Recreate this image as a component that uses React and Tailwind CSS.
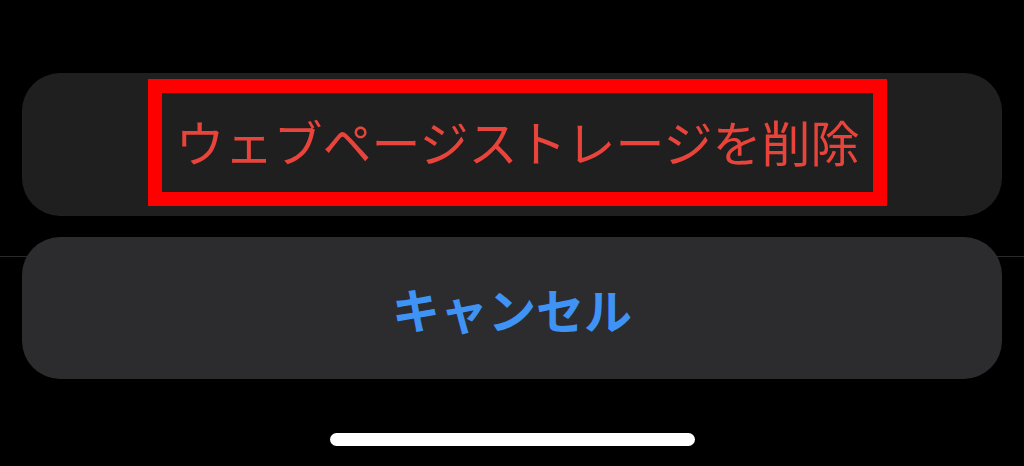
export default function App() {
  return (
    <div
      className="relative h-[466px] w-[1024px] overflow-hidden bg-black"
      style={{ fontFamily: '"Noto Sans CJK JP", "Noto Sans", sans-serif' }}
    >
      <div className="absolute inset-x-0 top-[256px] h-px bg-[#2a2a2a]" />
      <div className="relative flex flex-col px-[22px] pt-[73px]">
        <div className="flex h-[143px] items-center justify-center rounded-[38px] bg-[#1f1f1f]">
          <div className="mb-[4px] ml-[11px] flex h-[127px] w-[739px] items-center justify-center border-[14px] border-[#ff0000]">
            <span className="mb-[4px] text-[49px] leading-none text-[#e9443b]">
              ウェブページストレージを削除
            </span>
          </div>
        </div>
        <div className="mt-[21px] flex h-[142px] items-center justify-center rounded-[38px] bg-[#2c2c2e]">
          <span className="text-[48px] font-bold leading-none text-[#3f93f5]">キャンセル</span>
        </div>
        <div className="mt-[54px] flex justify-center">
          <div className="ml-[1px] h-[13px] w-[365px] rounded-full bg-white" />
        </div>
      </div>
    </div>
  );
}
